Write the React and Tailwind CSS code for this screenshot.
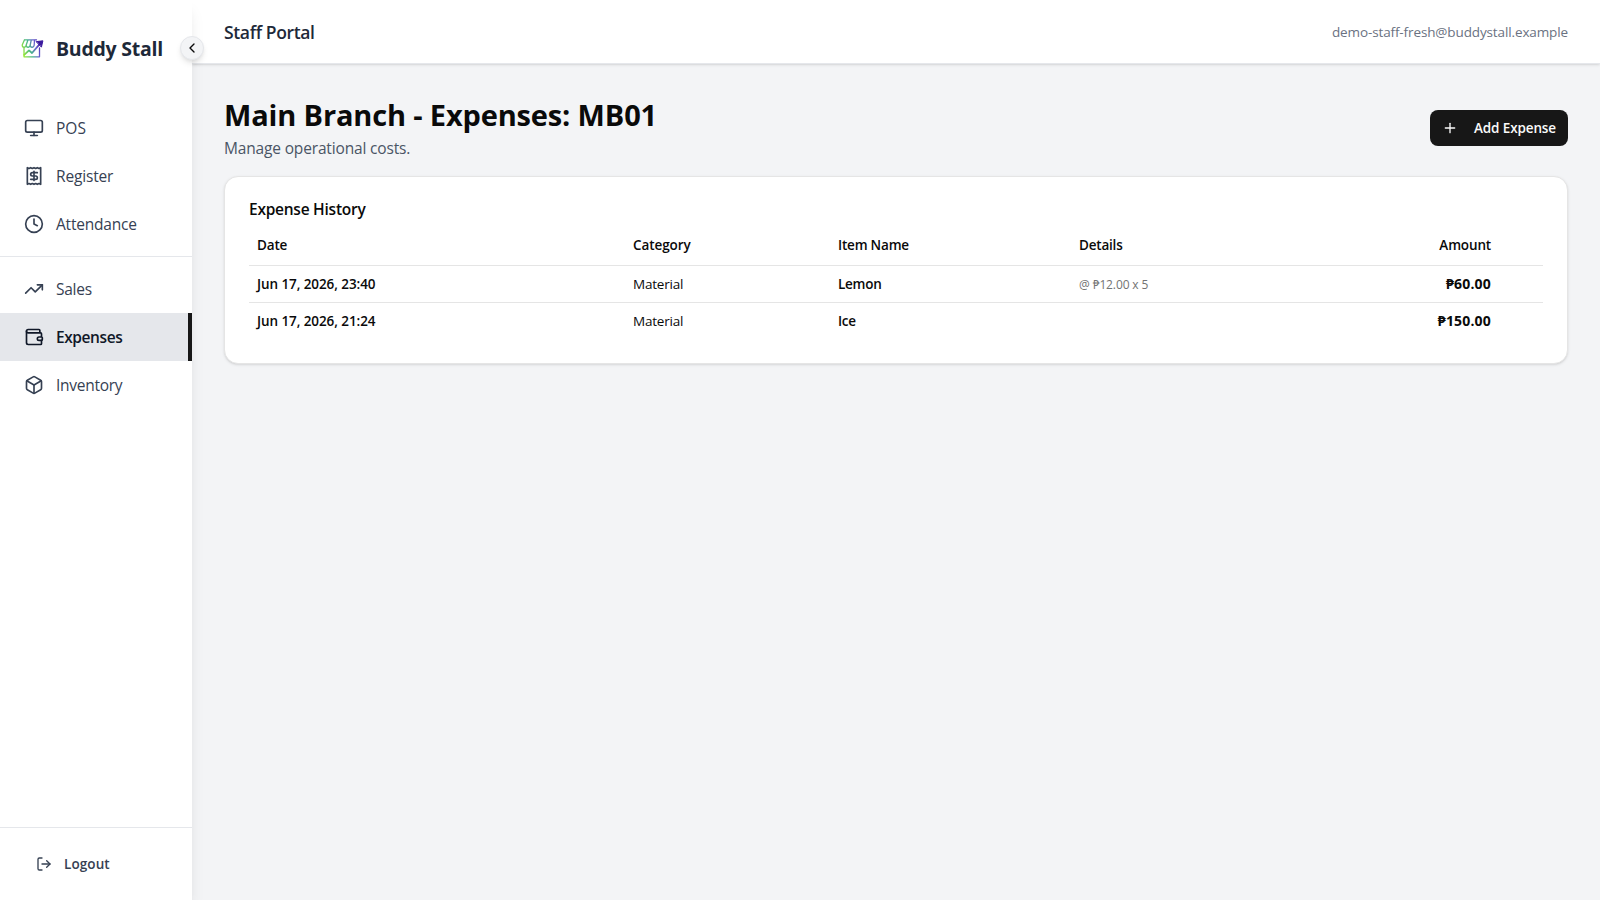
import React, { useState } from 'react';
import { Box, ChevronLeft, Clock, LogOut, Monitor, Plus, Receipt, TrendingUp, Wallet } from 'lucide-react';

const mainLinks = [
    { name: 'POS', icon: Monitor, tracking: 'tracking-normal' },
    { name: 'Register', icon: Receipt, tracking: 'tracking-[-0.16px]' },
    { name: 'Attendance', icon: Clock, tracking: 'tracking-[-0.2px]' },
];

const reportLinks = [
    { name: 'Sales', icon: TrendingUp, tracking: 'tracking-[-0.25px]' },
    { name: 'Expenses', icon: Wallet, tracking: 'tracking-[-0.42px]' },
    { name: 'Inventory', icon: Box, tracking: 'tracking-[-0.27px]' },
];

const expenses = [
    { id: 1, date: 'Jun 17, 2026, 23:40', category: 'Material', item: 'Lemon', details: '@ ₱12.00 x 5', amount: '₱60.00' },
    { id: 2, date: 'Jun 17, 2026, 21:24', category: 'Material', item: 'Ice', details: '', amount: '₱150.00' },
];

function Logo() {
    return (
        <svg className="w-6 h-6" viewBox="0 0 24 24" fill="none" stroke="url(#stall)" strokeWidth="1.3" strokeLinejoin="round" strokeLinecap="round">
            <defs>
                <linearGradient id="stall" gradientUnits="userSpaceOnUse" x1="2" y1="16" x2="22" y2="9">
                    <stop offset="0" stopColor="#9bea2f" />
                    <stop offset="0.4" stopColor="#45b58a" />
                    <stop offset="0.7" stopColor="#6a5fd0" />
                    <stop offset="1" stopColor="#3b1a9e" />
                </linearGradient>
            </defs>
            <path d="M4.5 3.8h12M4.5 3.8L2.2 9c0 3 3.6 3 4 0 0 3 3.6 3 4 0 0 3 3.6 3 4 0M8 3.8L6.2 9M11.3 3.8l-1.1 5.2M14.5 3.8l-.3 5.2" />
            <path d="M4 12v8.8h15.5V12" />
            <path d="M4.2 18.8l4.8-4.4 3 2.6 8.5-9.8" strokeWidth="1.8" />
            <path d="M16.5 5.6l6.4-.8-1.4 6z" fill="#3b1a9e" stroke="#3b1a9e" strokeWidth="1" />
        </svg>
    );
}

function NavItem({ link, active, onSelect }) {
    const Icon = link.icon;
    return (
        <button
            onClick={() => onSelect(link.name)}
            className={`flex h-12 w-full items-center gap-3 px-6 text-left text-[15.5px] ${active
                ? 'border-r-4 border-[#171717] bg-gray-200 font-semibold text-gray-900'
                : 'text-gray-700 hover:bg-gray-100'
            }`}
        >
            <Icon className="h-5 w-5 shrink-0" />
            <span className={`leading-6 ${link.tracking}`}>{link.name}</span>
        </button>
    );
}

export default function App() {
    const [current, setCurrent] = useState('Expenses');

    return (
        <div className="flex h-screen bg-gray-100 font-['Open_Sans','Noto_Sans',sans-serif] text-[#0a0a0a]">
            {/* Sidebar */}
            <aside className="relative z-20 flex w-48 shrink-0 flex-col bg-white shadow-lg">
                <div className="flex h-24 items-center gap-3 pl-5">
                    <Logo />
                    <span className="pt-0.5 text-[19.5px] leading-7 font-bold tracking-[-0.25px] text-gray-800 whitespace-nowrap">Buddy Stall</span>
                </div>
                <button className="absolute top-9 -right-3 flex h-6 w-6 items-center justify-center rounded-full border border-gray-200 bg-gray-100 shadow-md">
                    <ChevronLeft className="h-4 w-4 shrink-0" />
                </button>

                <nav className="flex-1 pt-2">
                    {mainLinks.map((link) => (
                        <NavItem key={link.name} link={link} active={current === link.name} onSelect={setCurrent} />
                    ))}
                    <div className="my-2 border-t border-gray-200" />
                    {reportLinks.map((link) => (
                        <NavItem key={link.name} link={link} active={current === link.name} onSelect={setCurrent} />
                    ))}
                </nav>

                <div className="border-t border-gray-200 p-4">
                    <button className="flex h-10 w-full items-center gap-3 px-5 text-[13.5px] font-semibold text-gray-700">
                        <LogOut className="h-4 w-4" />
                        <span className="leading-5 tracking-[0.1px]">Logout</span>
                    </button>
                </div>
            </aside>

            <div className="flex min-w-0 flex-1 flex-col">
                <header className="z-10 flex h-16 shrink-0 items-center justify-between border-b border-gray-200 bg-white px-8 shadow-sm">
                    <h2 className="text-[17.5px] leading-7 font-semibold tracking-[-0.35px] text-gray-800">Staff Portal</h2>
                    <span className="pt-px text-[13.5px] leading-5 tracking-[-0.12px] text-gray-500">demo-staff-fresh@buddystall.example</span>
                </header>

                <main className="flex-1 overflow-y-auto p-8">
                    <div className="mb-4 flex items-center justify-between">
                        <div>
                            <h1 className="h-9 pt-px text-[29px] leading-9 font-bold tracking-[-0.15px]">Main Branch - Expenses: MB01</h1>
                            <p className="mt-1 h-6 text-[15.5px] leading-6 tracking-[-0.16px] text-gray-600">Manage operational costs.</p>
                        </div>
                        <button className="flex h-9 w-[138px] items-center justify-between rounded-lg bg-[#171717] px-3 text-[13.5px] font-semibold text-neutral-50">
                            <Plus className="h-4 w-4" />
                            <span className="leading-5 tracking-[-0.12px]">Add Expense</span>
                        </button>
                    </div>

                    <div className="rounded-[14px] border border-neutral-200 bg-white p-6 shadow-sm">
                        <h3 className="mb-2 h-4 text-[15.5px] leading-4 font-semibold tracking-[-0.25px]">Expense History</h3>
                        <table className="w-full table-fixed text-left text-[13.5px] leading-5">
                            <colgroup>
                                <col className="w-[376px]" />
                                <col className="w-[205px]" />
                                <col className="w-[241px]" />
                                <col className="w-[240px]" />
                                <col className="w-[188px]" />
                                <col />
                            </colgroup>
                            <thead>
                                <tr className="h-10 border-b border-neutral-200">
                                    <th className="px-2 pt-px font-semibold tracking-[-0.15px]">Date</th>
                                    <th className="px-2 pt-px font-semibold tracking-[-0.08px]">Category</th>
                                    <th className="px-2 pt-px font-semibold tracking-[-0.2px]">Item Name</th>
                                    <th className="px-2 pt-px font-semibold tracking-[-0.2px]">Details</th>
                                    <th className="px-2 pt-px text-right font-semibold tracking-[-0.15px]">Amount</th>
                                    <th />
                                </tr>
                            </thead>
                            <tbody>
                                {expenses.map((row) => (
                                    <tr key={row.id} className="h-[37px] border-b border-neutral-200 last:border-0">
                                        <td className="px-2 font-semibold tracking-[-0.08px]">{row.date}</td>
                                        <td className="px-2 tracking-[-0.2px]">{row.category}</td>
                                        <td className="px-2 font-semibold tracking-[-0.25px]">{row.item}</td>
                                        <td className="px-2 pt-0.5 text-xs tracking-[-0.12px] text-neutral-500">{row.details}</td>
                                        <td className="px-2 text-right text-sm font-bold tracking-[0.18px]">{row.amount}</td>
                                        <td />
                                    </tr>
                                ))}
                            </tbody>
                        </table>
                    </div>
                </main>
            </div>
        </div>
    );
}
